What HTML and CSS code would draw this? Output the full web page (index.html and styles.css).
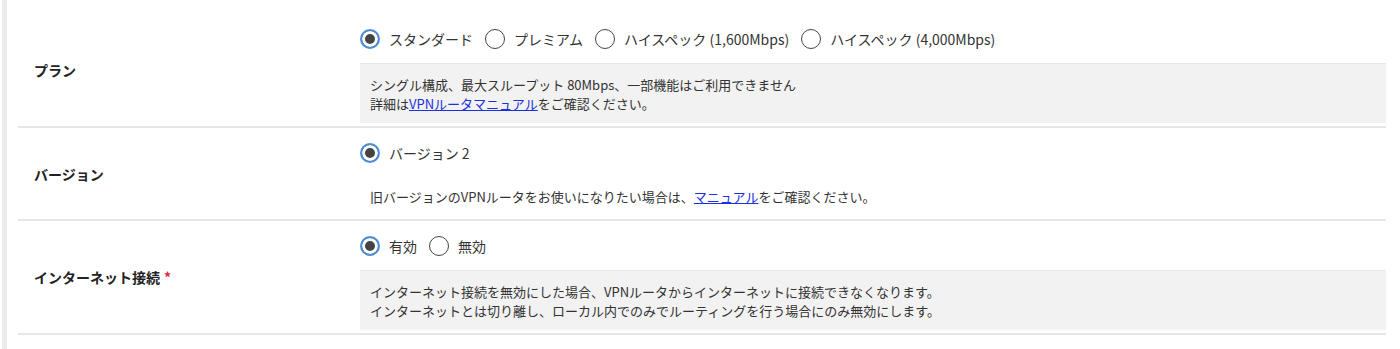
FILE: index.html
```html
<!DOCTYPE html>
<html lang="ja">
<head>
    <meta charset="UTF-8">
    <meta name="viewport" content="width=device-width, initial-scale=1.0">
    <title>VPNルータ設定</title>
    <link rel="stylesheet" href="styles.css">
</head>
<body>
    <div class="page">
        <div class="form-table">
            <div class="form-row">
                <div class="form-label">プラン</div>
                <div class="form-value">
                    <div class="radio-group">
                        <label class="radio"><input type="radio" name="plan" checked><span>スタンダード</span></label>
                        <label class="radio"><input type="radio" name="plan"><span>プレミアム</span></label>
                        <label class="radio"><input type="radio" name="plan"><span>ハイスペック (1,600Mbps)</span></label>
                        <label class="radio"><input type="radio" name="plan"><span>ハイスペック (4,000Mbps)</span></label>
                    </div>
                    <div class="note">
                        シングル構成、最大スループット 80Mbps、一部機能はご利用できません<br>
                        詳細は<a href="#">VPNルータマニュアル</a>をご確認ください。
                    </div>
                </div>
            </div>

            <div class="form-row">
                <div class="form-label">バージョン</div>
                <div class="form-value">
                    <div class="radio-group">
                        <label class="radio"><input type="radio" name="version" checked><span>バージョン 2</span></label>
                    </div>
                    <div class="note plain">
                        旧バージョンのVPNルータをお使いになりたい場合は、<a href="#">マニュアル</a>をご確認ください。
                    </div>
                </div>
            </div>

            <div class="form-row">
                <div class="form-label">インターネット接続<span class="required">*</span></div>
                <div class="form-value">
                    <div class="radio-group">
                        <label class="radio"><input type="radio" name="internet" checked><span>有効</span></label>
                        <label class="radio"><input type="radio" name="internet"><span>無効</span></label>
                    </div>
                    <div class="note">
                        インターネット接続を無効にした場合、VPNルータからインターネットに接続できなくなります。<br>
                        インターネットとは切り離し、ローカル内でのみでルーティングを行う場合にのみ無効にします。
                    </div>
                </div>
            </div>
        </div>
    </div>
</body>
</html>
```

FILE: styles.css
```css
html, body {
    margin: 0;
    padding: 0;
    background-color: #fff;
}
body {
    font-family: "Noto Sans CJK JP", "Noto Sans", sans-serif;
    color: #333;
}
.page {
    margin-left: 2px;
    border-left: 5px solid #ebebeb;
    min-height: 349px;
    padding-left: 11px;
    padding-right: 14px;
    box-sizing: border-box;
}
.form-table {
    padding-top: 14px;
}
.form-row {
    display: flex;
    align-items: center;
    border-bottom: 2px solid #e6e6e6;
}
.form-label {
    width: 342px;
    flex-shrink: 0;
    padding-left: 16px;
    box-sizing: border-box;
    font-size: 14px;
    font-weight: bold;
    line-height: 20px;
    color: #222;
}
.required {
    color: #e0243a;
    margin-left: 4px;
}
.form-value {
    flex: 1;
    padding-top: 15px;
    padding-bottom: 3px;
}
.radio-group {
    display: flex;
    align-items: center;
    gap: 12px;
    height: 20px;
}
.radio {
    display: flex;
    align-items: center;
    gap: 9px;
    font-size: 14px;
    line-height: 20px;
    color: #333;
    cursor: pointer;
}
.radio input {
    appearance: none;
    -webkit-appearance: none;
    margin: 0;
    width: 20px;
    height: 20px;
    border-radius: 50%;
    border: 1.5px solid #444;
    background-color: #fff;
    box-sizing: border-box;
}
.radio input:checked {
    border: 2px solid #4a90d9;
    background-color: #444;
    box-shadow: inset 0 0 0 3px #fff;
}
.note {
    margin-top: 14px;
    padding: 11px 10px 10px;
    background-color: #f2f2f2;
    border-top: 1px solid #e8e8e8;
    font-size: 13px;
    line-height: 19px;
    color: #333;
}
.note.plain {
    padding-top: 10px;
    background-color: transparent;
    border-top: none;
}
.note a {
    color: #1a30e0;
    text-decoration: underline;
}
```
